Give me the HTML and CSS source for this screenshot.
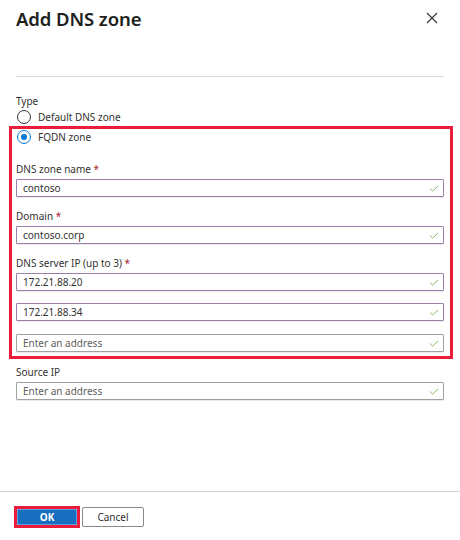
FILE: index.html
```html
<!DOCTYPE html>
<html>
<head>
<meta charset="utf-8">
<link rel="stylesheet" href="styles.css">
</head>
<body>
<div class="panel">
  <div class="header">
    <h1 class="title">Add DNS zone</h1>
    <svg class="close" width="12" height="12" viewBox="0 0 12 12"><path d="M1 1L11 11M11 1L1 11" stroke="#333" stroke-width="1.1" fill="none"/></svg>
  </div>
  <div class="sep"></div>
  <div class="form">
    <div class="label type">Type</div>
    <div class="radio-row"><span class="radio"></span><span class="rtext">Default DNS zone</span></div>
    <div class="highlight">
      <div class="radio-row"><span class="radio on"><span class="dot"></span></span><span class="rtext">FQDN zone</span></div>
      <div class="label l1">DNS zone name <span class="req">*</span></div>
      <div class="input filled"><span class="val">contoso</span><svg class="chk" width="10" height="7" viewBox="0 0 10 7"><path d="M1 3.5L3.6 6L9 1" stroke="#86bb6b" stroke-width="1" fill="none"/></svg></div>
      <div class="label l2">Domain <span class="req">*</span></div>
      <div class="input filled"><span class="val">contoso.corp</span><svg class="chk" width="10" height="7" viewBox="0 0 10 7"><path d="M1 3.5L3.6 6L9 1" stroke="#86bb6b" stroke-width="1" fill="none"/></svg></div>
      <div class="label l2">DNS server IP (up to 3) <span class="req">*</span></div>
      <div class="input filled"><span class="val">172.21.88.20</span><svg class="chk" width="10" height="7" viewBox="0 0 10 7"><path d="M1 3.5L3.6 6L9 1" stroke="#86bb6b" stroke-width="1" fill="none"/></svg></div>
      <div class="input filled i2"><span class="val">172.21.88.34</span><svg class="chk" width="10" height="7" viewBox="0 0 10 7"><path d="M1 3.5L3.6 6L9 1" stroke="#86bb6b" stroke-width="1" fill="none"/></svg></div>
      <div class="input empty i3"><span class="ph">Enter an address</span><svg class="chk" width="10" height="7" viewBox="0 0 10 7"><path d="M1 3.5L3.6 6L9 1" stroke="#86bb6b" stroke-width="1" fill="none"/></svg></div>
    </div>
    <div class="label src">Source IP</div>
    <div class="input empty outer"><span class="ph">Enter an address</span><svg class="chk" width="10" height="7" viewBox="0 0 10 7"><path d="M1 3.5L3.6 6L9 1" stroke="#86bb6b" stroke-width="1" fill="none"/></svg></div>
  </div>
  <div class="spacer"></div>
  <div class="footer">
    <div class="ok-wrap"><button class="btn ok">OK</button></div>
    <button class="btn cancel">Cancel</button>
  </div>
</div>
</body>
</html>
```

FILE: styles.css
```css
* { box-sizing: border-box; }
html, body { margin: 0; padding: 0; background: #fff; }
body {
  width: 460px;
  height: 540px;
  overflow: hidden;
  font-family: "Segoe UI", "Noto Sans", "Open Sans", sans-serif;
  color: #323130;
}
.panel { display: flex; flex-direction: column; height: 540px; }
.header {
  display: flex;
  align-items: center;
  justify-content: space-between;
  padding: 4px 22px 0 16px;
  height: 32px;
}
.title {
  margin: 0;
  font-size: 18.5px;
  font-weight: 600;
  color: #201f1e;
  letter-spacing: -0.1px;
}
.close { display: block; }
.sep { margin: 44px 16px 0 16px; height: 1px; background: #dcdcdc; }
.form { padding: 0 16px; }
.label {
  font-size: 10px;
  line-height: 14px;
  height: 14px;
  color: #323130;
}
.type { margin-top: 17px; }
.req { color: #a4262c; }
.radio-row { display: flex; align-items: center; height: 16px; margin-top: 1px; }
.radio {
  width: 14px; height: 14px;
  border: 1px solid #323130;
  border-radius: 50%;
  margin-left: 1px;
  display: flex; align-items: center; justify-content: center;
}
.radio.on { border-color: #0078d4; }
.dot { width: 6px; height: 6px; border-radius: 50%; background: #0078d4; }
.rtext { font-size: 10px; margin-left: 7px; line-height: 14px; }
.highlight {
  margin: 1px -9px 0 -7px;
  border: 3px solid #ea1c3c;
  padding: 0 6px 4px 4px;
}
.highlight > .radio-row { margin-top: 0; }
.l1 { margin-top: 17px; }
.l2 { margin-top: 12px; }
.input {
  margin-top: 3px;
  height: 18px;
  border: 1px solid #a0a0a0;
  border-radius: 1px;
  display: flex;
  align-items: center;
  justify-content: space-between;
  padding: 0 4px 0 6px;
  font-size: 10px;
  box-shadow: 0 1px 0 rgba(0,0,0,0.08);
}
.input.filled { border-color: #9b7ea9; }
.val { color: #323130; }
.ph { color: #605e5c; }
.chk { display: block; }
.i2 { margin-top: 12px; }
.i3 { margin-top: 13px; }
.src { margin-top: 6px; }
.spacer { flex: 1; }
.footer {
  border-top: 1px solid #d0d0d0;
  height: 49px;
  display: flex;
  align-items: flex-start;
  padding: 14px 0 0 14px;
  gap: 2px;
}
.ok-wrap { border: 3px solid #ea1c3c; padding: 0; display: flex; }
.btn {
  font-family: inherit;
  font-size: 10px;
  height: 16px;
  padding: 0;
  margin: 0;
  cursor: pointer;
}
.ok {
  width: 60px;
  background: #1a6ebf;
  border: 1px solid #5aa0df;
  color: #fff;
  font-weight: 700;
  border-radius: 1px;
}
.cancel {
  margin-top: 1px;
  width: 62px;
  height: 20px;
  background: #fff;
  border: 1px solid #8a8886;
  color: #323130;
  border-radius: 2px;
}
```
